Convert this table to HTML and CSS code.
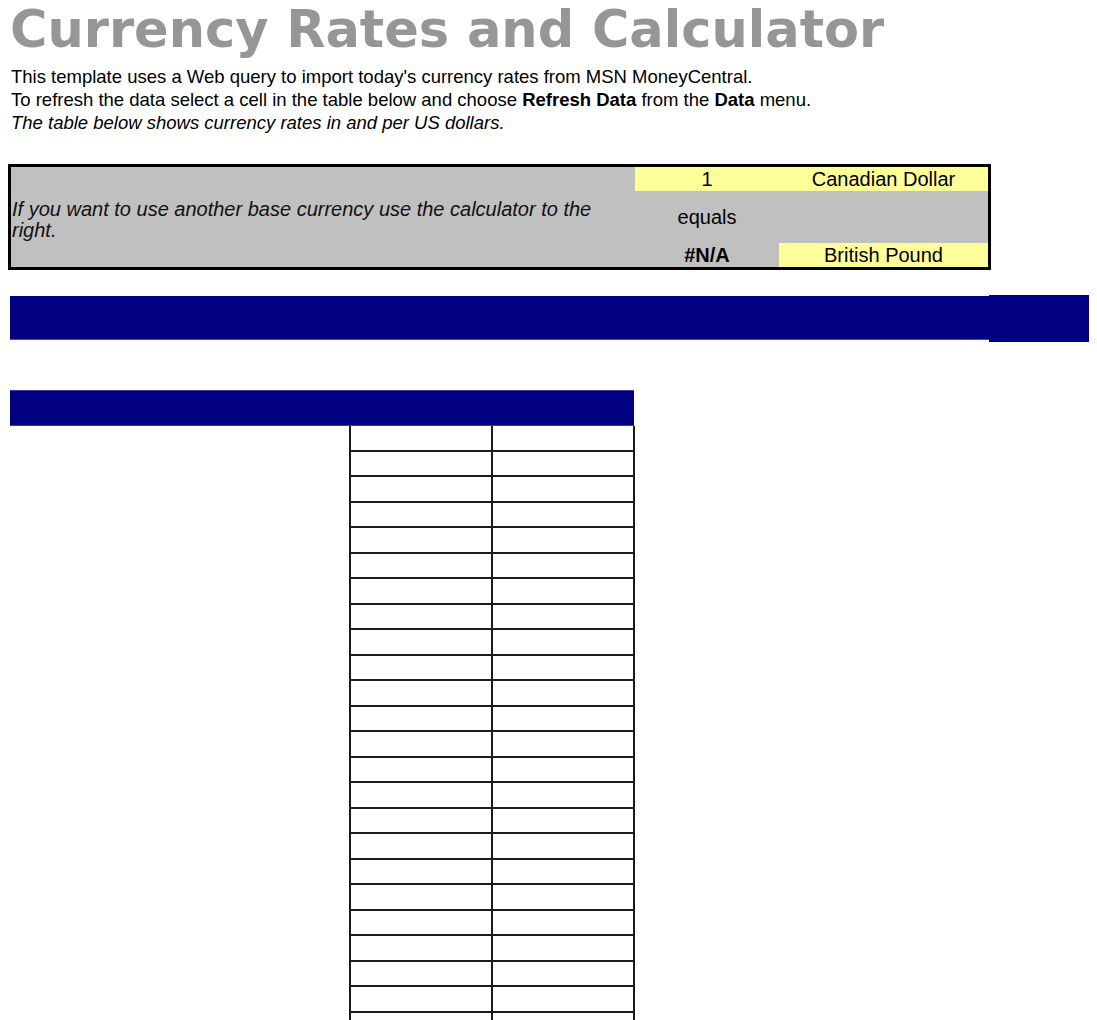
FILE: index.html
```html
<!DOCTYPE html>
<html lang="en">
<head>
<meta charset="utf-8">
<title>Currency Rates and Calculator</title>
<link rel="stylesheet" href="styles.css">
</head>
<body>
<h1 class="title">Currency Rates and Calculator</h1>
<div class="intro">
  <p>This template uses a Web query to import today's currency rates from MSN MoneyCentral.</p>
  <p>To refresh the data select a cell in the table below and choose <b>Refresh Data</b> from the <b>Data</b> menu.</p>
  <p class="note">The table below shows currency rates in and per US dollars.</p>
</div>

<div class="calc">
  <div class="calc-info">If you want to use another base currency use the calculator to the right.</div>
  <div class="cell yellow">1</div>
  <div class="cell yellow">Canadian Dollar</div>
  <div class="cell">equals</div>
  <div class="cell"></div>
  <div class="cell strong">#N/A</div>
  <div class="cell yellow">British Pound</div>
</div>

<div class="band">
  <div class="band-main"></div>
  <div class="band-end"></div>
</div>

<div class="table-head"></div>

<div class="grid">
  <div></div><div></div>
  <div></div><div></div>
  <div></div><div></div>
  <div></div><div></div>
  <div></div><div></div>
  <div></div><div></div>
  <div></div><div></div>
  <div></div><div></div>
  <div></div><div></div>
  <div></div><div></div>
  <div></div><div></div>
  <div></div><div></div>
  <div></div><div></div>
  <div></div><div></div>
  <div></div><div></div>
  <div></div><div></div>
  <div></div><div></div>
  <div></div><div></div>
  <div></div><div></div>
  <div></div><div></div>
  <div></div><div></div>
  <div></div><div></div>
  <div></div><div></div>
  <div></div><div></div>
</div>
</body>
</html>
```
FILE: styles.css
```css
* { box-sizing: border-box; }

body {
  margin: 0;
  background: #ffffff;
  font-family: "Liberation Sans", Arial, sans-serif;
  color: #000;
}

.title {
  margin: 4px 0 0 10px;
  font-family: "DejaVu Sans", sans-serif;
  font-weight: bold;
  font-size: 51px;
  line-height: 51px;
  color: #969696;
  white-space: nowrap;
}

.intro {
  margin: 10px 0 0 11px;
  font-size: 18.5px;
  line-height: 23px;
}

.intro p { margin: 0; white-space: nowrap; }

.intro .note { font-style: italic; }

.calc {
  margin: 30px 0 0 8px;
  width: 983px;
  border: 3px solid #000;
  background: #c0c0c0;
  display: grid;
  grid-template-columns: 624px 144px 209px;
  grid-template-rows: 24px 52px 24px;
  font-size: 20px;
}

.calc-info {
  grid-row: 1 / 4;
  display: flex;
  align-items: center;
  font-style: italic;
  line-height: 21px;
  padding: 6px 0 0 1px;
  color: #111;
}

.cell {
  display: flex;
  align-items: center;
  justify-content: center;
  line-height: 24px;
}

.cell.yellow { background: #ffff99; }
.cell.strong { font-weight: bold; }

.band {
  margin-top: 25px;
  display: flex;
  align-items: flex-start;
}

.band-main {
  margin: 1px 0 0 10px;
  width: 979px;
  height: 44px;
  background: #000080;
  border-bottom: 1px solid #4b4ba6;
}

.band-end {
  width: 100px;
  height: 47px;
  background: #000080;
}

.table-head {
  margin: 48px 0 0 10px;
  width: 624px;
  height: 36px;
  background: #000080;
  border-top: 1px solid #3a3a9c;
  border-bottom: 1px solid #3a3a9c;
}

.grid {
  margin-left: 349px;
  width: 286px;
  display: grid;
  grid-template-columns: 144px 142px;
  grid-auto-rows: 25.5px;
}

.grid > div {
  border-right: 2px solid #1c1c1c;
  border-bottom: 2px solid #1c1c1c;
}

.grid > div:nth-child(odd) {
  border-left: 2px solid #1c1c1c;
}
```
